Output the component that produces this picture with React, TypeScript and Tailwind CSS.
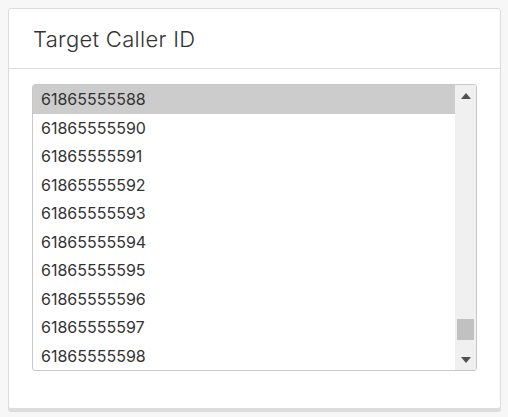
const ids = [
  '61865555588',
  '61865555590',
  '61865555591',
  '61865555592',
  '61865555593',
  '61865555594',
  '61865555595',
  '61865555596',
  '61865555597',
  '61865555598',
]

export default function App() {
  return (
    <div className="min-h-screen bg-[#f7f7f7] p-2 font-['Inter','Noto_Sans',sans-serif]">
      <div className="w-[493px] h-[401px] rounded-[3px] border border-[#dcdcdc] bg-white shadow-[0_3px_0_#dddddd] flex flex-col">
        {/* header */}
        <div className="h-[60px] border-b border-[#dcdcdc] flex items-center px-[24px]">
          <h2 className="text-[22px] font-light text-[#333] tracking-[0.3px] mt-[1px]">Target Caller ID</h2>
        </div>

        {/* list box */}
        <div className="px-[23px] pt-[15px]">
          <div className="h-[287px] rounded-[3px] border border-[#c8c8c8] flex overflow-hidden">
            <div className="flex-1 flex flex-col">
              {ids.map((id, i) => (
                <div
                  key={id}
                  className={
                    i === 0
                      ? 'h-[28.5px] flex items-center px-[8px] text-[16px] text-[#333] bg-[#cccccc]'
                      : 'h-[28.5px] flex items-center px-[8px] text-[16px] text-[#333]'
                  }
                >
                  {id}
                </div>
              ))}
            </div>

            {/* fake scrollbar */}
            <div className="w-[21px] bg-[#f0f0f0] flex flex-col items-center">
              <div className="h-[21px] flex items-center justify-center">
                <svg width="10" height="6" viewBox="0 0 10 6">
                  <path d="M5 0 L10 6 L0 6 Z" fill="#505050" />
                </svg>
              </div>
              <div className="flex-1 w-full flex flex-col justify-end px-[2px] pb-[9px]">
                <div className="h-[21px] w-full bg-[#c1c1c1]" />
              </div>
              <div className="h-[21px] flex items-center justify-center">
                <svg width="10" height="6" viewBox="0 0 10 6">
                  <path d="M0 0 L10 0 L5 6 Z" fill="#505050" />
                </svg>
              </div>
            </div>
          </div>
        </div>
      </div>
    </div>
  )
}
